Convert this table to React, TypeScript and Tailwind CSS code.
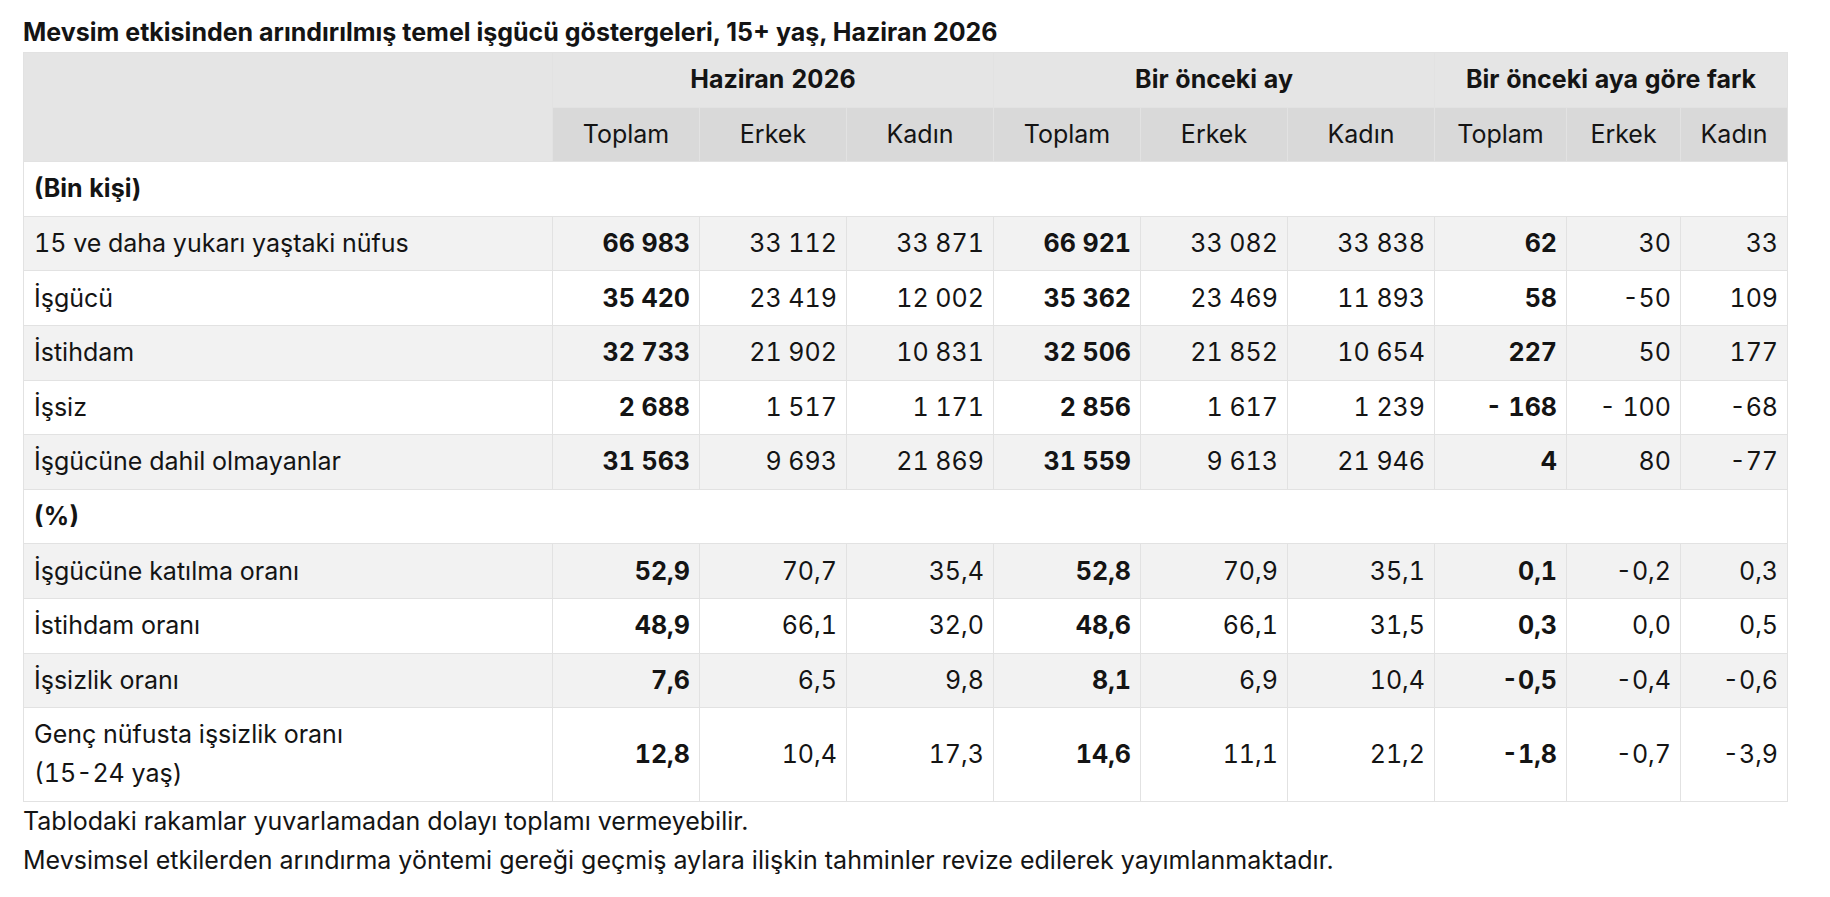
import React from 'react';

type Row = {
  label: React.ReactNode;
  values: string[];
};

const binKisi: Row[] = [
  { label: '15 ve daha yukarı yaştaki nüfus', values: ['66 983', '33 112', '33 871', '66 921', '33 082', '33 838', '62', '30', '33'] },
  { label: 'İşgücü', values: ['35 420', '23 419', '12 002', '35 362', '23 469', '11 893', '58', '-50', '109'] },
  { label: 'İstihdam', values: ['32 733', '21 902', '10 831', '32 506', '21 852', '10 654', '227', '50', '177'] },
  { label: 'İşsiz', values: ['2 688', '1 517', '1 171', '2 856', '1 617', '1 239', '- 168', '- 100', '-68'] },
  { label: 'İşgücüne dahil olmayanlar', values: ['31 563', '9 693', '21 869', '31 559', '9 613', '21 946', '4', '80', '-77'] },
];

const yuzde: Row[] = [
  { label: 'İşgücüne katılma oranı', values: ['52,9', '70,7', '35,4', '52,8', '70,9', '35,1', '0,1', '-0,2', '0,3'] },
  { label: 'İstihdam oranı', values: ['48,9', '66,1', '32,0', '48,6', '66,1', '31,5', '0,3', '0,0', '0,5'] },
  { label: 'İşsizlik oranı', values: ['7,6', '6,5', '9,8', '8,1', '6,9', '10,4', '-0,5', '-0,4', '-0,6'] },
  {
    label: (
      <>
        Genç nüfusta işsizlik oranı
        <br />
        (15-24 yaş)
      </>
    ),
    values: ['12,8', '10,4', '17,3', '14,6', '11,1', '21,2', '-1,8', '-0,7', '-3,9'],
  },
];

const colWidths = [529, 147, 147, 147, 147, 147, 147, 132, 114, 107];
const subHeads = ['Toplam', 'Erkek', 'Kadın', 'Toplam', 'Erkek', 'Kadın', 'Toplam', 'Erkek', 'Kadın'];

const cell = 'border border-[#e2e2e2] px-[10px] py-[7.3px]';

const DataRow = ({ row, shaded }: { row: Row; shaded: boolean }) => (
  <tr className={shaded ? 'bg-[#f2f2f2]' : 'bg-white'}>
    <td className={`${cell} text-left`}>{row.label}</td>
    {row.values.map((v, i) => (
      <td
        key={i}
        className={`${cell} pr-[9px] text-right whitespace-nowrap ${i % 3 === 0 ? 'font-bold' : ''}`}
      >
        {v}
      </td>
    ))}
  </tr>
);

const SectionRow = ({ title }: { title: string }) => (
  <tr className="bg-white">
    <td colSpan={10} className={`${cell} font-bold text-left`}>
      {title}
    </td>
  </tr>
);

export default function App() {
  return (
    <div
      className="bg-white min-h-screen pl-[23px] pt-[13px] text-[25px] leading-[39px] text-[#141414]"
      style={{ fontFamily: 'Inter, "Noto Sans", sans-serif' }}
    >
      <div className="font-bold">
        Mevsim etkisinden arındırılmış temel işgücü göstergeleri, 15+ yaş, Haziran 2026
      </div>
      <table className="table-fixed border-collapse w-[1764px] tabular-nums">
        <colgroup>
          {colWidths.map((w, i) => (
            <col key={i} style={{ width: w }} />
          ))}
        </colgroup>
        <thead>
          <tr className="bg-[#e5e5e5]">
            <th rowSpan={2} className={cell}></th>
            <th colSpan={3} className={`${cell} font-bold text-center`}>Haziran 2026</th>
            <th colSpan={3} className={`${cell} font-bold text-center`}>Bir önceki ay</th>
            <th colSpan={3} className={`${cell} font-bold text-center`}>Bir önceki aya göre fark</th>
          </tr>
          <tr className="bg-[#d9d9d9]">
            {subHeads.map((h, i) => (
              <th key={i} className={`${cell} font-normal text-center`}>
                {h}
              </th>
            ))}
          </tr>
        </thead>
        <tbody>
          <SectionRow title="(Bin kişi)" />
          {binKisi.map((r, i) => (
            <DataRow key={i} row={r} shaded={i % 2 === 0} />
          ))}
          <SectionRow title="(%)" />
          {yuzde.map((r, i) => (
            <DataRow key={i} row={r} shaded={i % 2 === 0} />
          ))}
        </tbody>
      </table>
      <div>Tablodaki rakamlar yuvarlamadan dolayı toplamı vermeyebilir.</div>
      <div>Mevsimsel etkilerden arındırma yöntemi gereği geçmiş aylara ilişkin tahminler revize edilerek yayımlanmaktadır.</div>
    </div>
  );
}
